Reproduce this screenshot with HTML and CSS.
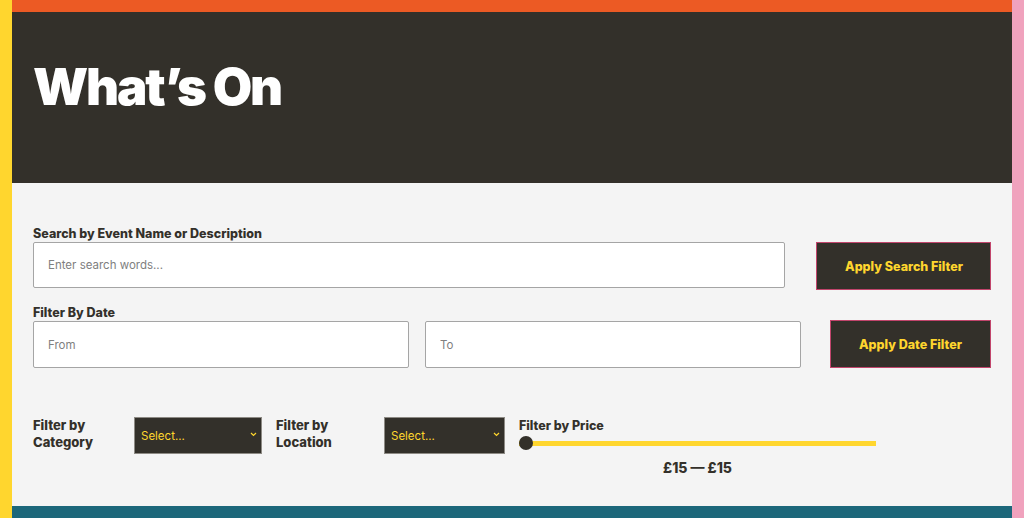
FILE: index.html
```html
<!DOCTYPE html>
<html lang="en">
<head>
<meta charset="utf-8">
<title>What's On</title>
<link rel="stylesheet" href="styles.css">
</head>
<body>
<div class="page">
  <header class="hero">
    <h1 class="hero-title">What’s On</h1>
  </header>
  <main class="filters">
    <div class="field">
      <label class="label" for="search">Search by Event Name or Description</label>
      <div class="row row-search">
        <input class="text-input" id="search" type="text" placeholder="Enter search words...">
        <button class="btn" type="button">Apply Search Filter</button>
      </div>
    </div>
    <div class="field field-date">
      <label class="label" for="from">Filter By Date</label>
      <div class="row row-date">
        <div class="date-pair">
          <input class="text-input" id="from" type="text" placeholder="From">
          <input class="text-input" type="text" placeholder="To">
        </div>
        <button class="btn" type="button">Apply Date Filter</button>
      </div>
    </div>
    <div class="row-filters">
      <div class="group">
        <span class="label group-label label-cat">Filter by Category</span>
        <div class="select select-cat">
          <span>Select...</span>
          <svg class="chev" width="7" height="5" viewBox="0 0 7 5"><path d="M1 1 L3.5 3.5 L6 1" fill="none" stroke="#ffd62e" stroke-width="1.2"/></svg>
        </div>
      </div>
      <div class="group">
        <span class="label group-label label-loc">Filter by Location</span>
        <div class="select select-loc">
          <span>Select...</span>
          <svg class="chev" width="7" height="5" viewBox="0 0 7 5"><path d="M1 1 L3.5 3.5 L6 1" fill="none" stroke="#ffd62e" stroke-width="1.2"/></svg>
        </div>
      </div>
      <div class="price">
        <span class="label">Filter by Price</span>
        <div class="slider">
          <div class="track"></div>
          <div class="thumb"></div>
        </div>
        <div class="price-value">£15 — £15</div>
      </div>
    </div>
  </main>
  <footer class="footer"></footer>
</div>
</body>
</html>
```
FILE: styles.css
```css
* { box-sizing: border-box; }
html, body { margin: 0; padding: 0; }
body {
  font-family: Inter, "Liberation Sans", sans-serif;
  color: #33302a;
  background: #f4f4f4;
}
.page {
  width: 1024px;
  height: 518px;
  overflow: hidden;
  border-left: 12px solid #ffd62e;
  border-right: 12px solid #f0a2bd;
  display: flex;
  flex-direction: column;
}
.hero {
  background: #33302a;
  border-top: 12px solid #ec5a24;
  height: 183px;
  padding: 44px 21px 0;
}
.hero-title {
  margin: 0;
  color: #fff;
  font-family: Inter, "Liberation Sans", sans-serif;
  font-weight: 900;
  font-size: 51px;
  line-height: 62px;
  letter-spacing: -2.2px;
}
.filters {
  background: #f4f4f4;
  padding: 43px 21px 0;
  height: 323px;
}
.label {
  display: block;
  font-weight: 800;
  font-size: 12.5px;
  line-height: 16px;
  color: #33302a;
}
.row {
  display: flex;
  align-items: stretch;
}
.row-search { gap: 31px; }
.row-search .text-input { flex: 1; height: 46px; }
.row-search .btn { height: 48px; padding: 0 27px 0 28px; }
.field-date { margin-top: 15px; }
.row-date { gap: 29px; }
.date-pair { flex: 1; display: flex; gap: 16px; }
.date-pair .text-input { flex: 1; height: 47px; }
.row-date .btn { height: 48px; margin-top: -1px; }
.text-input {
  border: 1px solid #a5a5a5;
  border-radius: 2px;
  background: #fff;
  padding: 0 14px;
  font-family: Inter, "Liberation Sans", sans-serif;
  font-size: 11.5px;
  color: #33302a;
}
.text-input::placeholder { color: #808080; }
.btn {
  background: #33302a;
  border: 1px solid #c2456c;
  color: #ffd62e;
  font-family: Inter, "Liberation Sans", sans-serif;
  font-weight: 800;
  font-size: 12.5px;
  padding: 0 28px;
  white-space: nowrap;
}
.row-filters {
  display: flex;
  align-items: flex-start;
  margin-top: 49px;
  gap: 14px;
}
.group { display: flex; align-items: flex-start; }
.group-label { line-height: 17px; padding-top: 0; font-size: 13px; }
.label-cat { width: 101px; }
.label-loc { width: 108px; }
.select {
  height: 37px;
  background: #33302a;
  border: 1px solid #8d8a84;
  display: flex;
  align-items: center;
  justify-content: space-between;
  padding: 0 4px 0 6px;
  color: #ffd62e;
  font-size: 11.5px;
}
.select-cat { width: 128px; }
.select-loc { width: 121px; }
.chev { margin-top: -2px; }
.price { width: 357px; padding-top: 1px; }
.slider {
  position: relative;
  height: 14px;
  margin-top: 2px;
  display: flex;
  align-items: center;
}
.track {
  width: 100%;
  height: 5px;
  background: #ffd62e;
}
.thumb {
  position: absolute;
  left: 0;
  top: 0;
  width: 14px;
  height: 14px;
  border-radius: 50%;
  background: #33302a;
}
.price-value {
  text-align: center;
  font-weight: 800;
  font-size: 14px;
  margin-top: 9px;
}
.footer {
  flex: 1;
  background: #1c677a;
}
```
